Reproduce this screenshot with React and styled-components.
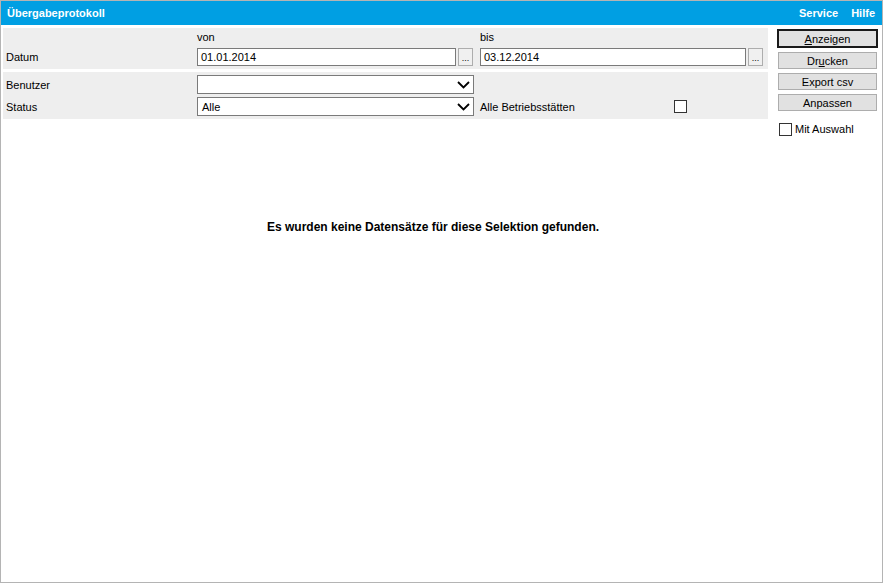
import React from "react";
import styled, { createGlobalStyle } from "styled-components";

const Global = createGlobalStyle`
  html, body { margin: 0; padding: 0; background: #fff; }
  body { font-family: "Liberation Sans", Arial, sans-serif; font-size: 11px; color: #000; }
  * { box-sizing: border-box; }
`;

const Window = styled.div`
  width: 883px;
  height: 583px;
  border: 1px solid #b4b4b4;
  background: #fff;
  display: flex;
  flex-direction: column;
`;

const TitleBar = styled.div`
  height: 24px;
  background: #009fe3;
  color: #fff;
  font-weight: bold;
  font-size: 11px;
  display: flex;
  align-items: center;
  padding: 0 7px 0 6px;
`;

const Title = styled.div`
  flex: 1;
`;

const MenuLink = styled.span`
  margin-left: ${(p) => p.$gap || 0}px;
`;

const TopRow = styled.div`
  display: flex;
  padding: 3px 0 0 2px;
`;

const LeftCol = styled.div`
  width: 765px;
  display: flex;
  flex-direction: column;
  gap: 3px;
`;

const Panel = styled.div`
  background: #eeeeee;
  padding: ${(p) => p.$pad};
  display: flex;
  flex-direction: column;
  gap: ${(p) => p.$gap || 0}px;
`;

const Row = styled.div`
  display: flex;
  align-items: center;
  height: ${(p) => p.$h}px;
`;

const Label = styled.div`
  width: ${(p) => p.$w}px;
  padding-left: ${(p) => p.$pl || 0}px;
  flex: none;
  white-space: nowrap;
`;

const TextInput = styled.div`
  width: ${(p) => p.$w}px;
  height: 18px;
  border: 1px solid #7a7a7a;
  background: #fff;
  padding-left: 3px;
  display: flex;
  align-items: center;
  flex: none;
`;

const DotsButton = styled.div`
  width: 15px;
  height: 18px;
  margin-left: 2px;
  margin-right: ${(p) => p.$mr || 0}px;
  border: 1px solid #adadad;
  background: #f0f0f0;
  display: flex;
  align-items: flex-end;
  justify-content: center;
  font-size: 9px;
  line-height: 13px;
  flex: none;
`;

const Select = styled.div`
  width: 277px;
  height: 19px;
  border: 1px solid #7a7a7a;
  background: #fff;
  display: flex;
  align-items: center;
  padding: 0 3px 0 4px;
  flex: none;
`;

const SelectValue = styled.div`
  flex: 1;
`;

const Checkbox = styled.div`
  width: 13px;
  height: 13px;
  border: 1px solid #333;
  background: #fff;
  flex: none;
`;

const RightCol = styled.div`
  margin-left: 9px;
  width: 101px;
  display: flex;
  flex-direction: column;
  padding-top: 1px;
`;

const Button = styled.div`
  height: ${(p) => (p.$default ? 19 : 17)}px;
  margin: ${(p) => (p.$default ? "0" : "4px 1px 0 1px")};
  background: #e1e1e1;
  border: ${(p) => (p.$default ? "2px solid #1a1a1a" : "1px solid #adadad")};
  display: flex;
  align-items: center;
  justify-content: center;
  font-size: 11px;
`;

const CheckRow = styled.div`
  display: flex;
  align-items: center;
  gap: 3px;
  margin: 11px 0 0 2px;
  height: 14px;
`;

const Message = styled.div`
  margin-top: 84px;
  padding-right: 17px;
  text-align: center;
  font-weight: bold;
  font-size: 12px;
  line-height: 14px;
`;

const Chevron = () => (
  <svg width="13" height="8" viewBox="0 0 13 8">
    <polyline points="1,1 6.5,6.5 12,1" fill="none" stroke="#000" strokeWidth="1.8" />
  </svg>
);

export default function App() {
  return (
    <>
      <Global />
      <Window>
        <TitleBar>
          <Title>Übergabeprotokoll</Title>
          <MenuLink>Service</MenuLink>
          <MenuLink $gap={13}>Hilfe</MenuLink>
        </TitleBar>
        <TopRow>
          <LeftCol>
            <Panel $pad="1px 0 3px 0" $gap={3}>
              <Row $h={16}>
                <Label $w={194} />
                <Label $w={283}>von</Label>
                <Label $w={200}>bis</Label>
              </Row>
              <Row $h={18}>
                <Label $w={194} $pl={3}>Datum</Label>
                <TextInput $w={259}>01.01.2014</TextInput>
                <DotsButton $mr={7}>...</DotsButton>
                <TextInput $w={266}>03.12.2014</TextInput>
                <DotsButton>...</DotsButton>
              </Row>
            </Panel>
            <Panel $pad="3px 0 3px 0" $gap={3}>
              <Row $h={19}>
                <Label $w={194} $pl={3}>Benutzer</Label>
                <Select>
                  <SelectValue />
                  <Chevron />
                </Select>
              </Row>
              <Row $h={19}>
                <Label $w={194} $pl={3}>Status</Label>
                <Select>
                  <SelectValue>Alle</SelectValue>
                  <Chevron />
                </Select>
                <Label $w={200} $pl={6}>Alle Betriebsstätten</Label>
                <Checkbox />
              </Row>
            </Panel>
          </LeftCol>
          <RightCol>
            <Button $default>
              <span><u>A</u>nzeigen</span>
            </Button>
            <Button>
              <span>Dr<u>u</u>cken</span>
            </Button>
            <Button>Export csv</Button>
            <Button>Anpassen</Button>
            <CheckRow>
              <Checkbox />
              <span>Mit Auswahl</span>
            </CheckRow>
          </RightCol>
        </TopRow>
        <Message>Es wurden keine Datensätze für diese Selektion gefunden.</Message>
      </Window>
    </>
  );
}
